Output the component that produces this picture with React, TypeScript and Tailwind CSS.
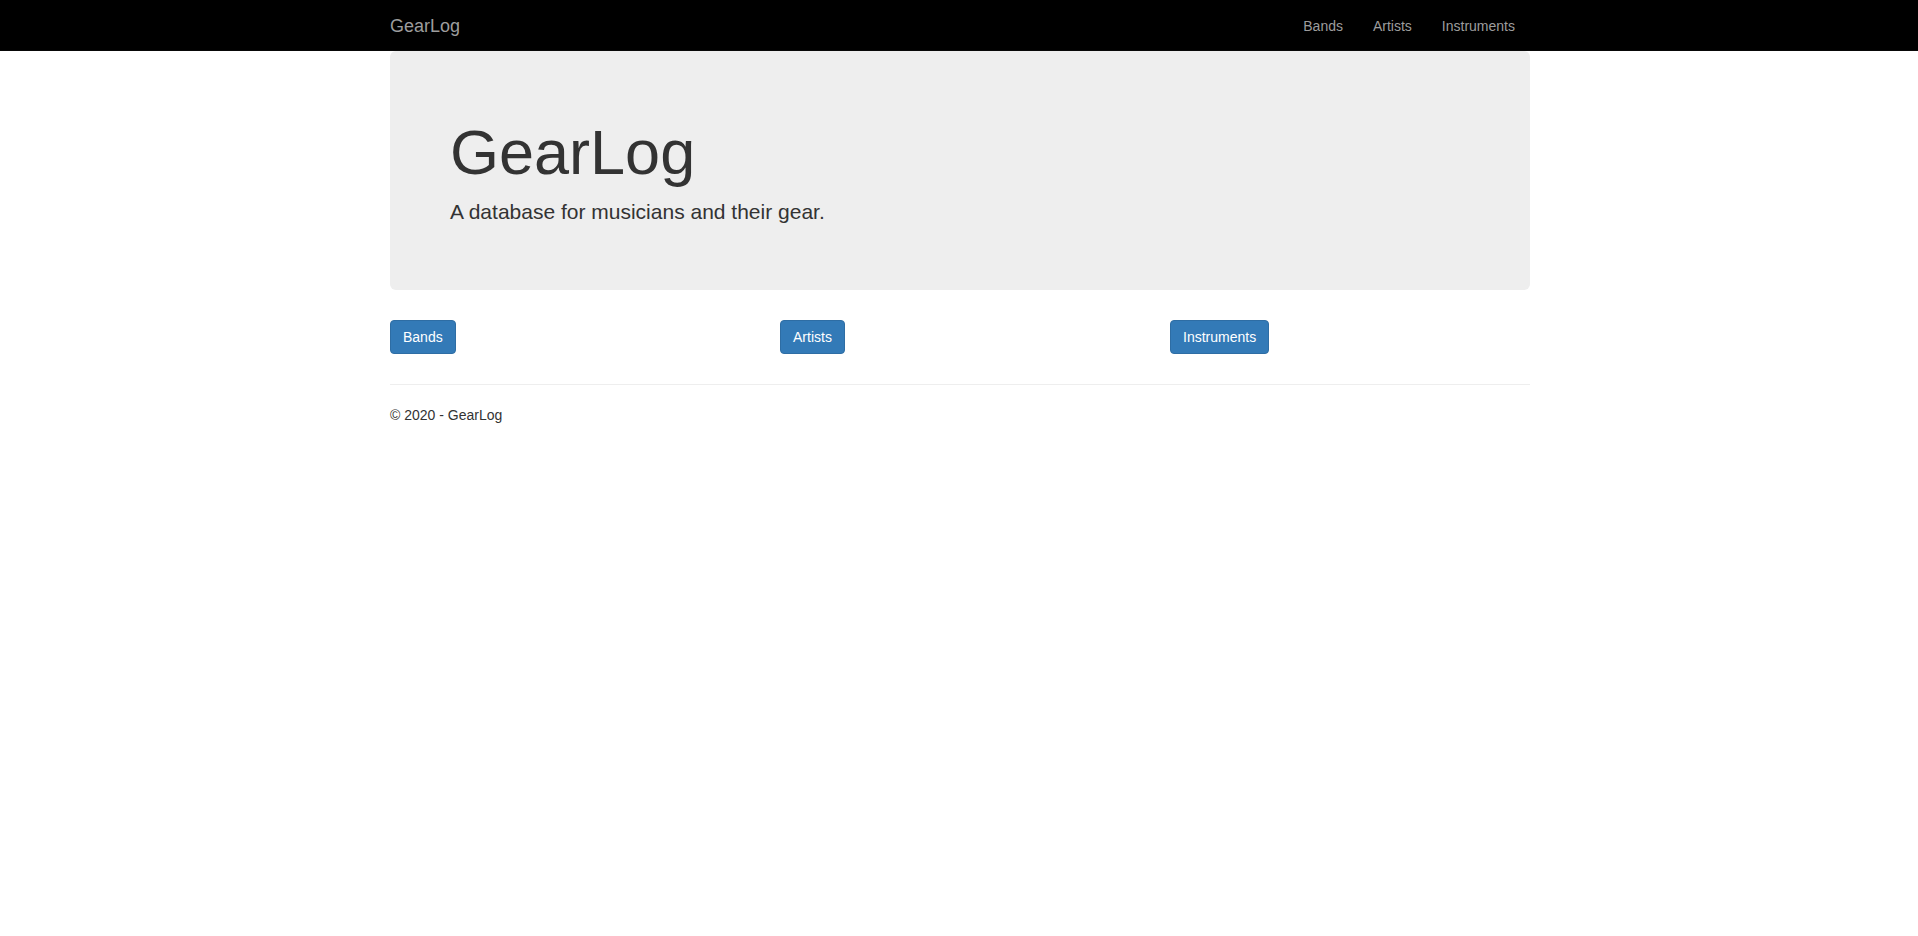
export default function App() {
  const font = { fontFamily: '"Liberation Sans", Arial, Helvetica, sans-serif' };
  return (
    <div style={font} className="min-h-[936px] bg-white text-[14px] leading-[20px] text-[#333]">
      <nav className="h-[51px] bg-black border-b border-[#080808]">
        <div className="w-[1172px] mx-auto pl-[2px] pr-[15px] flex items-start justify-between">
          <a className="block h-[50px] px-[15px] pt-[16px] pb-[14px] text-[18px] leading-[20px] text-[#9d9d9d]">GearLog</a>
          <ul className="flex">
            <li><a className="block px-[15px] pt-[16px] pb-[14px] leading-[20px] text-[#9d9d9d]">Bands</a></li>
            <li><a className="block px-[15px] pt-[16px] pb-[14px] leading-[20px] text-[#9d9d9d]">Artists</a></li>
            <li><a className="block px-[15px] pt-[16px] pb-[14px] leading-[20px] text-[#9d9d9d]">Instruments</a></li>
          </ul>
        </div>
      </nav>
      <div className="w-[1172px] mx-auto pl-[17px] pr-[15px]">
        <div className="bg-[#eee] rounded-[6px] px-[60px] pt-[47px] pb-[48px] mb-[30px]">
          <h1 className="mt-[20px] mb-[10px] text-[63px] leading-[1.1] font-medium text-[#333]">GearLog</h1>
          <p className="mb-[15px] text-[21px] leading-[29.4px] text-[#333]">A database for musicians and their gear.</p>
        </div>
        <div className="grid grid-cols-3 -mx-[15px]">
          {["Bands", "Artists", "Instruments"].map((t) => (
            <div key={t} className="px-[15px]">
              <p className="mb-[10px]">
                <a className="inline-block px-[12px] py-[6px] text-[14px] leading-[20px] text-white bg-[#337ab7] border border-[#2e6da4] rounded-[4px]">{t}</a>
              </p>
            </div>
          ))}
        </div>
        <hr className="mt-[20px] mb-[20px] border-0 border-t border-[#eee]" />
        <footer>
          <p className="mb-[10px]">© 2020 - GearLog</p>
        </footer>
      </div>
    </div>
  );
}
